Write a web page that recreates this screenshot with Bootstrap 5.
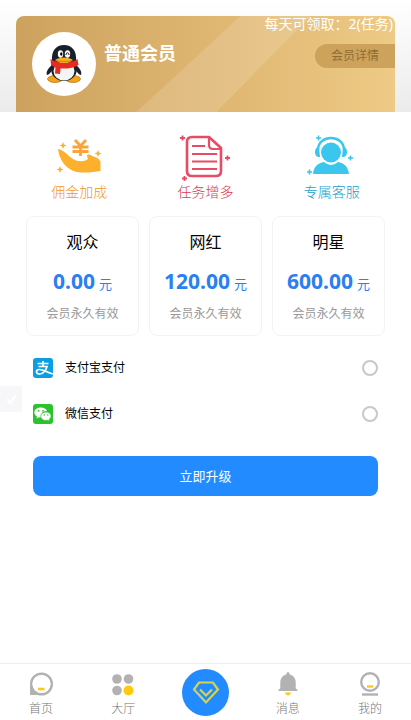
<!DOCTYPE html>
<html lang="zh-CN">
<head>
<meta charset="utf-8">
<meta name="viewport" content="width=device-width, initial-scale=1">
<title>会员升级</title>
<link href="https://cdn.jsdelivr.net/npm/bootstrap@5.3.0/dist/css/bootstrap.min.css" rel="stylesheet">
<style>
body{font-family:"Noto Sans","Noto Sans CJK SC",sans-serif;font-size:12px;line-height:18px;color:#000;background:#fff}
button{font-family:inherit}
.hero{background:linear-gradient(#fff,#ebebeb)}
.member{height:96px;border-radius:8px 8px 0 0;background:linear-gradient(90deg,#cda25f,#deb571 50%,#edca85)}
.shine{inset:0;width:100%;height:100%}
.avatar{width:64px;height:64px}
.level{font-size:18px;line-height:26px;font-weight:700}
.quota{font-size:14px;line-height:16px;white-space:nowrap;padding-right:2px}
.detail{width:80px;height:24px;margin-top:12px;background:#cda35b;color:#8e6d35;text-decoration:none;border-radius:12px 0 0 12px}
.perk{flex:1 1 0;font-size:14px;line-height:20px;font-weight:300}
.perk svg{width:50px;height:50px}
.gold{color:#f0962a}.rose{color:#d83a4c}.sky{color:#229fcc}
.plans{gap:10px;padding:0 26px;margin-top:14px}
.plan{flex:1 1 0;height:120px;border:1px solid #f3f3f3;border-radius:8px;background:#fff;padding-top:15px}
.plan-name{font-size:16px;line-height:20px}
.price{font-size:21px;line-height:30px;color:#2c7ff0;font-weight:700;margin-top:14px;white-space:nowrap}
.price small{font-size:13px;font-weight:400}
.term{color:#999;margin-top:6px}
.payment{padding:9px 33px 0}
.pay{height:46px;gap:12px}
.pay svg{width:20px;height:20px}
.pay .form-check-input{width:16px;height:16px;border:2px solid #c8c8c8}
.pay .form-check-input:checked{border-color:#228bff;background-color:#228bff}
.upgrade{height:40px;margin-top:19px;border-radius:8px;background:#228bff;color:#fff;font-size:13px;line-height:18px;padding:0}
.upgrade:hover{background:#147ef2;color:#fff}
.side-tab{left:0;top:386px;width:22px;height:26px;background:#f7f7f9;border:0}
.tabs{height:57px;border-top:1px solid #eee;background:#fff}
.tabs a{flex:1 1 0;color:#777;text-decoration:none;font-weight:300;padding-top:8px}
.tabs svg{width:26px;height:26px}
.tabs .label-text{padding-top:2px}
.tabs .gem-link{padding-top:5px}
.tabs .gem{width:47px;height:47px}
</style>
<script src="https://cdn.jsdelivr.net/npm/bootstrap@5.3.0/dist/js/bootstrap.bundle.min.js" defer></script>
</head>
<body class="min-vh-100 d-flex flex-column">
<header class="hero px-3 pt-3">
  <div class="member position-relative d-flex justify-content-between">
    <svg class="shine position-absolute" viewBox="0 0 378 96" preserveAspectRatio="none" aria-hidden="true"><path d="M120 96 224 0H294L200 96Z" fill="#fff" opacity=".14"/></svg>
    <div class="position-relative d-flex p-3 pe-0 gap-2">
      <svg class="avatar" viewBox="0 0 64 64" role="img" aria-label="头像">
        <circle cx="32" cy="32" r="32" fill="#fff"/>
        <path d="M20 33c-5 4-6 8-5 10 2 0 4-3 5-5ZM44 33c5 4 6 8 5 10-2 0-4-3-5-5Z" fill="#18202b"/>
        <ellipse cx="23" cy="47" rx="7.500" ry="3.500" fill="#f5a313" stroke="#a85c08" stroke-width=".6"/><ellipse cx="41" cy="47" rx="7.500" ry="3.500" fill="#f5a313" stroke="#a85c08" stroke-width=".6"/>
        <ellipse cx="32" cy="37" rx="13" ry="12" fill="#18202b"/><ellipse cx="32" cy="39" rx="10.500" ry="9.500" fill="#f4f4f4"/>
        <path d="M20 29c-1-10 4-16 12-16s13 6 12 16Z" fill="#18202b"/>
        <ellipse cx="28.500" cy="22" rx="2.700" ry="3.700" fill="#fff"/><ellipse cx="35.500" cy="22" rx="2.700" ry="3.700" fill="#fff"/>
        <ellipse cx="29.300" cy="22" rx="1.200" ry="1.800"/><path d="M34 23c0-3 3-3 3 0" fill="none" stroke="#111"/>
        <path d="M18.500 27c8 5 19 5 27 0l1 6c-5 3-11 4-18 3.500l-.5 5.500-5-.5.500-6-4.500-2.500Z" fill="#e52b22"/>
        <path d="M23 28c4-3.500 14-3.500 18 0-4 4-14 4-18 0Z" fill="#f7b019"/><path d="M24 28.500c5 1.500 11 1.500 16 0" fill="none" stroke="#b86610" stroke-width=".6"/>
      </svg>
      <strong class="level text-white mt-2">普通会员</strong>
    </div>
    <div class="position-relative d-flex flex-column align-items-end">
      <span class="quota text-white">每天可领取：2(任务)</span>
      <a class="detail d-flex align-items-center justify-content-center" href="#">会员详情</a>
    </div>
  </div>
</header>
<main class="flex-grow-1">
  <section class="perks d-flex px-3 pt-3 mt-1">
    <div class="perk gold text-center"><svg viewBox="0 0 50 50" aria-hidden="true"><g fill="#fdb02c"><path d="M4 17c6 1 9 6 15 10 5 3 11 3 15 0l-1-3c0-2 3-2 5 0 4 1 8 3 8.500 6v9c-7 1-19 3-27 0C10 35 5 26 4 17Z"/><path d="M9 10l1 2.500 2.500 1-2.500 1L9 17l-1-2.500-2.500-1 2.500-1ZM44 18l1 2.500 2.500 1-2.500 1-1 2.500-1-2.500-2.500-1 2.500-1ZM6 34l1 2.500 2.500 1-2.500 1L6 41l-1-2.500-2.500-1 2.500-1Z"/></g><path d="M21 8l5.500 6L32 8M18.500 15h16M18.500 19.500h16M26.500 14v10" fill="none" stroke="#f9a33a" stroke-width="2.800"/></svg><div class="label-text">佣金加成</div></div>
    <div class="perk rose text-center"><svg viewBox="0 0 50 50" aria-hidden="true"><g fill="none" stroke="#e84b65" stroke-width="2.600" stroke-linejoin="round"><path d="M12 5h17l12 11v23q0 5-5 5H12q-5 0-5-5V10q0-5 5-5Z"/><path d="M29 5v8q0 4 4 4h8M12 14h13M12 22h25M12 29.500h25M12 37h25" stroke-width="2.200"/></g><path d="M0 6h5M2.500 3.500v5M45 26h5M47.500 23.500v5M2 46.500h5M4.500 44v5" stroke="#e84b65" stroke-width="1.800"/></svg><div class="label-text">任务增多</div></div>
    <div class="perk sky text-center"><svg viewBox="0 0 50 50" aria-hidden="true"><g fill="#3bc6ed"><circle cx="24" cy="20.500" r="10"/><path d="M6 42c1-8 5-11 11-12q7 6 14 0c6 1 10 4 11 12Z"/><path d="M12 15h-1q-3 1-3 5t3 5h2ZM36 15h1q3 1 3 5t-3 5h-2Z"/></g><path d="M11 18c0-16 26-16 26 0" fill="none" stroke="#3bc6ed" stroke-width="2.400"/><path d="M9 6h5M11.500 3.500v5M41 26h5M43.500 23.500v5M0 40h5M2.500 37.500v5" stroke="#3bc6ed" stroke-width="1.600"/></svg><div class="label-text">专属客服</div></div>
  </section>
  <section class="plans d-flex">
    <div class="plan text-center"><div class="plan-name">观众</div><div class="price">0.00<small class="ms-1">元</small></div><div class="term">会员永久有效</div></div>
    <div class="plan text-center"><div class="plan-name">网红</div><div class="price">120.00<small class="ms-1">元</small></div><div class="term">会员永久有效</div></div>
    <div class="plan text-center"><div class="plan-name">明星</div><div class="price">600.00<small class="ms-1">元</small></div><div class="term">会员永久有效</div></div>
  </section>
  <form class="payment">
    <div class="pay d-flex align-items-center">
      <svg viewBox="0 0 20 20" aria-hidden="true"><rect width="20" height="20" rx="3" fill="#0b9ee0"/><path d="M4.500 5.500h11M10 3v5.500M5.500 8.500h8.500c-1 4-4 7.500-7.500 7.500-4 0-4-4.500 0-4.500 4 0 7 3 13.500 4.500" fill="none" stroke="#fff" stroke-width="1.700"/></svg>
      <label class="flex-grow-1" for="alipay">支付宝支付</label><input class="form-check-input m-0" type="radio" name="payment" id="alipay">
    </div>
    <div class="pay d-flex align-items-center">
      <svg viewBox="0 0 20 20" aria-hidden="true"><rect width="20" height="20" rx="3" fill="#2bc22b"/><path d="M8 3.500c-8 0-8 7-4 9l-.5 2 2.500-1.300q2 .5 3.500 0C7 9 10 7 14 7.300 13.500 5 11 3.500 8 3.500Z" fill="#fff"/><path d="M13 8c-7 0-7 8.500 0 8.500l1.500-.2 2 1-.5-1.800C20 13 18 8 13 8Z" fill="#fff" stroke="#2bc22b" stroke-width=".7"/><g fill="#2bc22b"><circle cx="5.700" cy="6.800" r=".9"/><circle cx="10" cy="6.800" r=".9"/><circle cx="11.300" cy="11" r=".7"/><circle cx="14.800" cy="11" r=".7"/></g></svg>
      <label class="flex-grow-1" for="wechat">微信支付</label><input class="form-check-input m-0" type="radio" name="payment" id="wechat">
    </div>
    <button class="upgrade btn w-100" type="button">立即升级</button>
  </form>
</main>
<button class="side-tab position-fixed p-0 d-flex align-items-center justify-content-center" type="button" aria-label="展开"><svg width="14" height="14" viewBox="0 0 14 14"><path d="M3 7l3 4 6-8" fill="none" stroke="#fff" stroke-width="2"/></svg></button>
<nav class="tabs d-flex text-center sticky-bottom">
  <a href="#"><svg viewBox="0 0 26 26"><circle cx="13.500" cy="12" r="10.300" fill="none" stroke="#b2b2b2" stroke-width="2.500"/><path d="M2 12v11h11l-3-2-5-4Z" fill="#b2b2b2"/><circle cx="13.500" cy="12" r="9" fill="#fff"/><path d="M10 17h6.500" stroke="#fbc91b" stroke-width="2.600"/></svg><div class="label-text">首页</div></a>
  <a href="#"><svg viewBox="0 0 26 26"><g fill="#b2b2b2"><circle cx="7" cy="7" r="4.800"/><circle cx="18.500" cy="7" r="4.800"/><circle cx="7" cy="18.500" r="4.800"/></g><circle cx="18.500" cy="18.500" r="5" fill="#fdca10"/></svg><div class="label-text">大厅</div></a>
  <a href="#" class="gem-link" aria-label="会员"><svg class="gem" viewBox="0 0 47 47"><circle cx="23.500" cy="23.500" r="23.500" fill="#228bff"/><path d="M17 13.500h14l5 7L24 33.500 12 20.500ZM18 20.500l6 6 6-6" fill="none" stroke="#d6d34e" stroke-width="2.200"/></svg></a>
  <a href="#"><svg viewBox="0 0 26 26"><path d="M13 0q1.700 0 1.700 2.500c4 1 6 4 6 8V16l2 2.500v.5H3.300v-.5l2-2.500v-5.500c0-4 2-7 6-8Q11.300 0 13 0Z" fill="#b2b2b2"/><path d="M9.500 20.500h7q-3.500 6-7 0Z" fill="#fbc91b"/></svg><div class="label-text">消息</div></a>
  <a href="#"><svg viewBox="0 0 26 26"><circle cx="13" cy="10" r="8.800" fill="none" stroke="#b2b2b2" stroke-width="2.400"/><path d="M10 14.500h6" stroke="#fbc91b" stroke-width="2.400"/><path d="M5 22.500h16" stroke="#b2b2b2" stroke-width="2.400"/></svg><div class="label-text">我的</div></a>
</nav>
</body>
</html>
